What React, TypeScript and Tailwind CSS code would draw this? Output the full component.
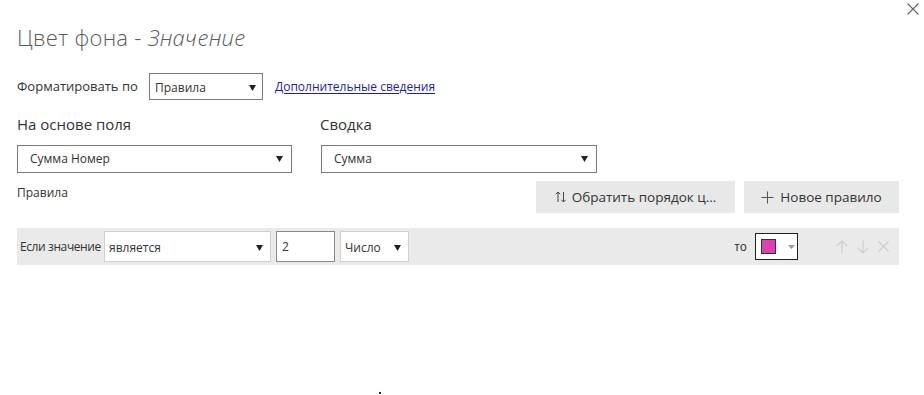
import React from "react";

const Caret = ({ className = "" }: { className?: string }) => (
  <svg width="7" height="6" viewBox="0 0 7 6" className={className}>
    <path d="M0 0 H7 L3.5 6 Z" fill="#222" />
  </svg>
);

const SelectBox = ({
  value,
  className = "",
  textClass = "",
}: {
  value: string;
  className?: string;
  textClass?: string;
}) => (
  <div className={`flex items-center justify-between bg-white ${className}`}>
    <span className={textClass}>{value}</span>
    <Caret />
  </div>
);

export default function App() {
  return (
    <div
      className="relative w-[924px] h-[395px] bg-white overflow-hidden pl-[17px] text-[#333]"
      style={{ fontFamily: '"Open Sans", "Noto Sans", sans-serif' }}
    >
      {/* close */}
      <svg
        className="absolute top-[3px] left-[907px]"
        width="12"
        height="12"
        viewBox="0 0 12 12"
      >
        <path d="M0.5 0.5 L11.5 11.5 M11.5 0.5 L0.5 11.5" stroke="#666" strokeWidth="1.1" />
      </svg>

      <h1 className="pt-[22px] h-[52px] text-[22px] leading-[30px] font-light text-[#5a5a5a] tracking-[0.3px]">
        Цвет фона - <span className="italic">Значение</span>
      </h1>

      <div className="mt-[21px] flex items-center h-[27px] text-[13px]">
        <span className="w-[132px]">Форматировать по</span>
        <SelectBox
          value="Правила"
          className="w-[114px] h-[27px] border border-[#7a7a7a] pl-[5px] pr-[6px] pt-[2px]"
          textClass="text-[12px]"
        />
        <a className="ml-[12px] text-[12px] text-[#1c1ca8] underline underline-offset-2" href="#">
          Дополнительные сведения
        </a>
      </div>

      <div className="mt-[14px] flex h-[20px] items-center text-[15px] text-[#333]">
        <span className="w-[303px]">На основе поля</span>
        <span>Сводка</span>
      </div>

      <div className="mt-[11px] flex gap-[29px]">
        <SelectBox
          value="Сумма Номер"
          className="w-[275px] h-[28px] border border-[#7a7a7a] pl-[12px] pr-[8px]"
          textClass="text-[12px]"
        />
        <SelectBox
          value="Сумма"
          className="w-[276px] h-[28px] border border-[#7a7a7a] pl-[12px] pr-[8px]"
          textClass="text-[12px]"
        />
      </div>

      <div className="mt-[8px] flex w-[882px] items-start">
        <span className="mt-[3px] text-[12px] flex-1">Правила</span>
        <div className="flex gap-[9px]">
          <div className="flex h-[32px] w-[199px] items-center justify-center gap-[5px] bg-[#e8e8e8] text-[13.5px] text-[#333]">
            <svg width="12" height="12" viewBox="0 0 12 12">
              <path
                d="M3 11 V1 M0.8 3.2 L3 1 L5.2 3.2 M8.5 1 V11 M6.3 8.8 L8.5 11 L10.7 8.8"
                stroke="#444"
                strokeWidth="1"
                fill="none"
              />
            </svg>
            <span>Обратить порядок ц...</span>
          </div>
          <div className="flex h-[32px] w-[155px] items-center justify-center gap-[6px] bg-[#e8e8e8] text-[13.5px] text-[#333]">
            <svg width="13" height="13" viewBox="0 0 13 13">
              <path d="M6.5 0.5 V12.5 M0.5 6.5 H12.5" stroke="#555" strokeWidth="1" />
            </svg>
            <span>Новое правило</span>
          </div>
        </div>
      </div>

      <div className="mt-[15px] flex h-[37px] w-[882px] items-center bg-[#eaeaea] pl-[3px] text-[12px]">
        <span className="w-[84px] tracking-[-0.4px]">Если значение</span>
        <SelectBox
          value="является"
          className="w-[167px] h-[31px] border border-[#cfcfcf] pl-[4px] pr-[7px] pt-[2px]"
          textClass="text-[12px]"
        />
        <div className="ml-[5px] flex h-[31px] w-[59px] items-center border border-[#8a8a8a] bg-white pl-[5px] text-[12px]">
          2
        </div>
        <SelectBox
          value="Число"
          className="ml-[5px] w-[69px] h-[31px] border border-[#cfcfcf] pl-[4px] pr-[7px] pt-[2px]"
          textClass="text-[12px]"
        />
        <div className="flex-1" />
        <span className="mr-[8px] text-[12px] tracking-[0.3px]" style={{ fontFamily: '"Liberation Sans", sans-serif' }}>
          то
        </span>
        <div className="flex h-[27px] w-[43px] items-center border border-[#222] bg-white pl-[5px]">
          <div className="h-[15px] w-[15px] border border-[#333] bg-[#e03fb4]" />
          <svg width="7" height="4" viewBox="0 0 7 4" className="ml-[12px]">
            <path d="M0 0 H7 L3.5 4 Z" fill="#999" />
          </svg>
        </div>
        <div className="ml-[38px] mr-[10px] flex items-center gap-[9px]">
          <svg width="12" height="14" viewBox="0 0 12 14">
            <path d="M6 13.5 V1 M0.8 6.2 L6 1 L11.2 6.2" stroke="#cdcdcd" strokeWidth="1.2" fill="none" />
          </svg>
          <svg width="12" height="14" viewBox="0 0 12 14">
            <path d="M6 0.5 V13 M0.8 7.8 L6 13 L11.2 7.8" stroke="#cdcdcd" strokeWidth="1.2" fill="none" />
          </svg>
          <svg width="11" height="11" viewBox="0 0 11 11">
            <path d="M0.5 0.5 L10.5 10.5 M10.5 0.5 L0.5 10.5" stroke="#cdcdcd" strokeWidth="1.2" />
          </svg>
        </div>
      </div>

      <div className="absolute left-[379px] top-[392px] h-[2px] w-[2px] bg-[#1a1a9a]" />
    </div>
  );
}
